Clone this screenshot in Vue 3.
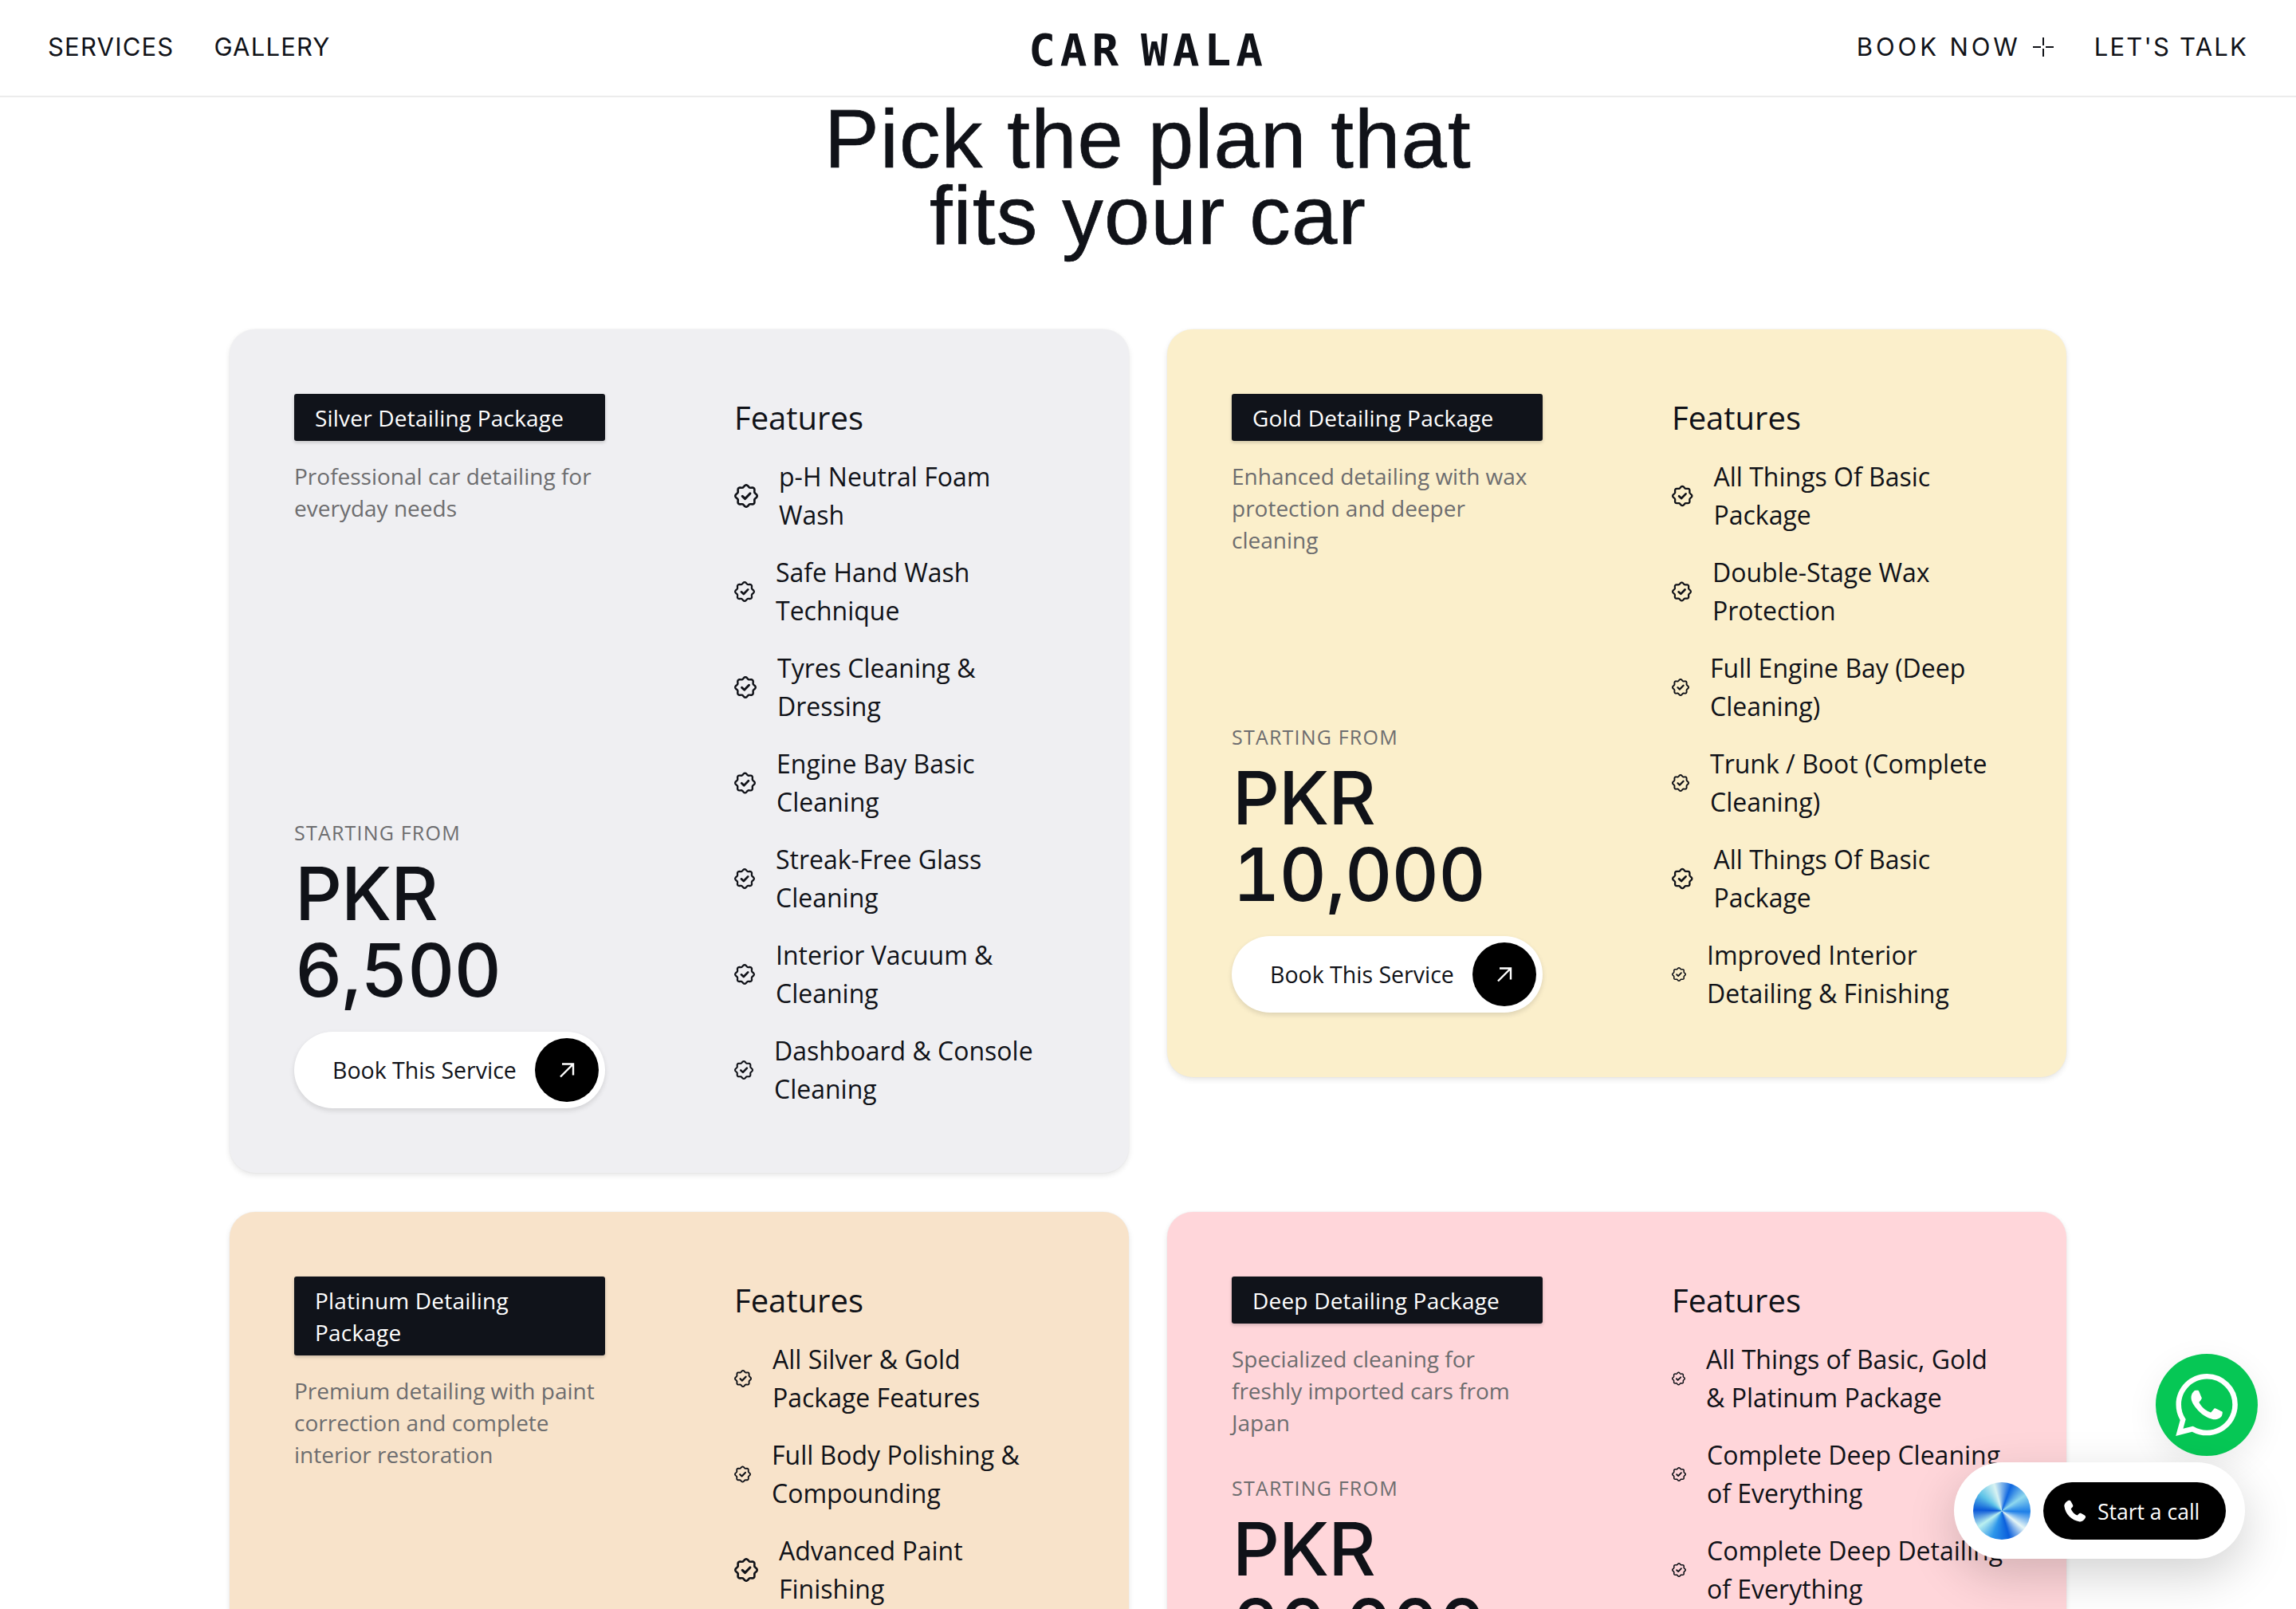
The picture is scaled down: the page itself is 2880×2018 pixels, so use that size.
<script setup>
const plans = [
  {
    name: 'Silver Detailing Package', tone: 'silver',
    desc: 'Professional car detailing for\neveryday needs', amount: '6,500',
    features: [
      ['p-H Neutral Foam\nWash', 30], ['Safe Hand Wash\nTechnique', 26], ['Tyres Cleaning &\nDressing', 28],
      ['Engine Bay Basic\nCleaning', 27], ['Streak-Free Glass\nCleaning', 26], ['Interior Vacuum &\nCleaning', 26],
      ['Dashboard & Console\nCleaning', 24],
    ],
  },
  {
    name: 'Gold Detailing Package', tone: 'gold',
    desc: 'Enhanced detailing with wax\nprotection and deeper\ncleaning', amount: '10,000',
    features: [
      ['All Things Of Basic\nPackage', 26.5], ['Double-Stage Wax\nProtection', 25], ['Full Engine Bay (Deep\nCleaning)', 22],
      ['Trunk / Boot (Complete\nCleaning)', 22], ['All Things Of Basic\nPackage', 26.5], ['Improved Interior\nDetailing & Finishing', 18],
    ],
  },
  {
    name: 'Platinum Detailing\nPackage', tone: 'platinum',
    desc: 'Premium detailing with paint\ncorrection and complete\ninterior restoration', amount: '15,000',
    features: [
      ['All Silver & Gold\nPackage Features', 22], ['Full Body Polishing &\nCompounding', 21], ['Advanced Paint\nFinishing', 30],
    ],
  },
  {
    name: 'Deep Detailing Package', tone: 'deep',
    desc: 'Specialized cleaning for\nfreshly imported cars from\nJapan', amount: '20,000',
    features: [
      ['All Things of Basic, Gold\n& Platinum Package', 17], ['Complete Deep Cleaning\nof Everything', 18], ['Complete Deep Detailing\nof Everything', 18],
    ],
  },
]

// Scalloped badge outline: a circle with eight soft lobes.
const badgePath = Array.from({ length: 96 }, (_, i) => {
  const a = (i / 96) * Math.PI * 2
  const r = 10 + 0.95 * Math.cos(8 * a)
  return `${i ? 'L' : 'M'}${(12 + r * Math.sin(a)).toFixed(2)} ${(12 - r * Math.cos(a)).toFixed(2)}`
}).join('') + 'Z'
</script>

<template>
  <div class="page">
    <header class="nav">
      <nav class="links">
        <a>SERVICES</a>
        <a>GALLERY</a>
      </nav>
      <div class="logo">CAR WALA</div>
      <nav class="links right">
        <a class="book">BOOK NOW
          <svg viewBox="0 0 28 28" width="28" height="28" fill="none" stroke="#101218" stroke-width="2">
            <path d="M14 2v10M14 16v10M1 14h10M17 14h10" />
          </svg>
        </a>
        <a class="talk">LET'S TALK</a>
      </nav>
    </header>

    <h1 class="title">Pick the plan that<br />fits your car</h1>

    <main class="plans">
      <article v-for="plan in plans" :key="plan.name" class="card" :class="plan.tone">
        <div class="info">
          <div class="top">
            <div class="tag">{{ plan.name }}</div>
            <p class="desc">{{ plan.desc }}</p>
          </div>
          <div class="price">
            <div class="from">STARTING FROM</div>
            <div class="amount">PKR<br />{{ plan.amount }}</div>
            <button class="cta">
              <span>Book This Service</span>
              <i class="arrow">
                <svg viewBox="0 0 20 20" width="20" height="20" fill="none" stroke="#fff" stroke-width="2.4">
                  <path d="M2 18.500 18 2.500M4 2.500h14v14" />
                </svg>
              </i>
            </button>
          </div>
        </div>
        <div class="features">
          <h2>Features</h2>
          <ul>
            <li v-for="(f, i) in plan.features" :key="i">
              <svg class="badge" :style="{ width: f[1] + 'px' }" viewBox="0 0 24 24" fill="none" stroke="#101218" stroke-width="2.1" stroke-linejoin="round" stroke-linecap="round">
                <path :d="badgePath" />
                <path d="m8.200 12.300 2.700 2.500 5-5.200" stroke-width="2.500" />
              </svg>
              <span>{{ f[0] }}</span>
            </li>
          </ul>
        </div>
      </article>
    </main>

    <a class="whatsapp">
      <svg viewBox="0 0 24 24" width="78" height="78" fill="#fff">
        <path d="M17.47 14.38c-.3-.15-1.76-.87-2.03-.97-.27-.1-.47-.15-.67.15-.2.3-.77.97-.94 1.16-.17.2-.35.22-.64.08-.3-.15-1.26-.46-2.39-1.48-.88-.79-1.48-1.76-1.65-2.06-.17-.3-.02-.46.13-.6.13-.14.3-.35.45-.53.15-.17.2-.3.3-.5.1-.2.05-.37-.03-.52-.07-.15-.67-1.61-.92-2.2-.24-.58-.49-.5-.67-.51h-.57c-.2 0-.52.07-.8.37-.27.3-1.04 1.02-1.04 2.48s1.07 2.88 1.21 3.07c.15.2 2.1 3.2 5.08 4.49.71.3 1.26.49 1.7.62.71.23 1.36.2 1.87.12.57-.09 1.76-.72 2-1.41.25-.7.25-1.29.18-1.41-.08-.13-.27-.2-.57-.35Z" />
        <path d="M12.05 21.79h-.01a9.87 9.87 0 0 1-5.03-1.38l-.36-.21-3.74.98 1-3.65-.24-.37a9.86 9.86 0 0 1-1.51-5.26c0-5.45 4.44-9.88 9.89-9.88a9.82 9.82 0 0 1 6.99 2.9 9.82 9.82 0 0 1 2.89 6.99c0 5.45-4.43 9.88-9.88 9.88Zm8.41-18.3A11.82 11.82 0 0 0 12.05 0C5.5 0 .16 5.34.16 11.89c0 2.1.55 4.14 1.59 5.95L.06 24l6.3-1.65a11.88 11.88 0 0 0 5.68 1.45h.01c6.55 0 11.89-5.34 11.9-11.9a11.82 11.82 0 0 0-3.49-8.41Z" />
      </svg>
    </a>

    <div class="call">
      <span class="orb"></span>
      <button class="start">
        <svg viewBox="0 0 24 24" width="34" height="34" fill="#fff">
          <path d="M6.600 2.200c.9-.5 1.800-.2 2.300.7l1.700 3.100c.4.700.2 1.500-.3 2L9 9.300c.8 2.500 3 4.900 5.700 5.800l1.300-1.400c.5-.5 1.300-.7 2-.3l3.100 1.800c.9.500 1.100 1.500.6 2.300-1 1.700-2.800 3.600-5 3.300C9.700 19.900 4 14.200 3.100 7.300 2.800 5 4.800 3.200 6.600 2.200Z" />
        </svg>
        <span>Start a call</span>
      </button>
    </div>
  </div>
</template>

<style>
html, body { margin: 0; overflow: hidden; background: #fff; }
</style>

<style scoped>
.page {
  position: relative;
  height: 2018px;
  overflow: hidden;
  background: #fff;
  color: #101218;
  font-family: "Open Sans", "Noto Sans", sans-serif;
}
.nav {
  box-sizing: border-box;
  height: 122px;
  display: grid;
  grid-template-columns: 1fr auto 1fr;
  align-items: center;
  padding: 0 60px 3px 60px;
  border-bottom: 2px solid #ececec;
}
.links {
  display: flex;
  gap: 50px;
  font-family: Inter, sans-serif;
  font-size: 31px;
  letter-spacing: 1.2px;
}
.links.right { justify-content: flex-end; gap: 50px; }
.book { display: flex; align-items: center; gap: 14px; letter-spacing: 3.9px; }
.talk { letter-spacing: 2.2px; }
.logo {
  font-family: "DejaVu Sans Mono", monospace;
  font-weight: 700;
  font-size: 56px;
  letter-spacing: 6px;
  word-spacing: -18px;
  line-height: 1;
  padding-top: 9px;
}
.title {
  margin: 0;
  padding-top: 5px;
  text-align: center;
  font-family: "Liberation Sans", sans-serif;
  font-weight: 400;
  font-size: 103px;
  letter-spacing: 1.2px;
  line-height: 96px;
  -webkit-text-stroke: 0.7px #101218;
}
.plans {
  margin: 94px 288px 0;
  display: grid;
  grid-template-columns: 1128px 1128px;
  gap: 49px 48px;
  align-items: start;
}
.card {
  display: grid;
  grid-template-columns: 390px 1fr;
  column-gap: 162px;
  padding: 81px 80px 81px 81px;
  border-radius: 32px;
  box-shadow: 0 0 0 1px rgba(0, 0, 0, 0.02), 0 3px 7px rgba(0, 0, 0, 0.1);
}
.silver { background: #efeff2; }
.gold { background: #fbefcb; }
.platinum { background: #f8e3ca; min-height: 1000px; }
.deep { background: #ffd6da; }
.info {
  display: flex;
  flex-direction: column;
  justify-content: space-between;
  gap: 44px;
}
.tag {
  padding: 9.5px 26px;
  background: #10131a;
  color: #fff;
  border-radius: 3px;
  font-size: 28px;
  letter-spacing: 0.2px;
  line-height: 40px;
  box-shadow: 0 2px 4px rgba(0, 0, 0, 0.18);
  white-space: pre-line;
}
.desc {
  margin: 24px 0 0;
  color: #6d6d6f;
  font-size: 28px;
  line-height: 40px;
  white-space: pre-line;
}
.from {
  color: #6d6d6f;
  font-size: 25px;
  line-height: 36px;
  letter-spacing: 1.2px;
}
.amount {
  margin-top: 11px;
  font-family: Inter, sans-serif;
  font-weight: 450;
  font-variant-numeric: tabular-nums;
  font-size: 92px;
  letter-spacing: -1px;
  line-height: 96px;
  padding-bottom: 1px;
  padding-left: 1px;
}
.cta {
  margin-top: 28px;
  width: 390px;
  height: 96px;
  display: flex;
  align-items: center;
  justify-content: space-between;
  padding: 0 8px 0 48px;
  border: 0;
  border-radius: 48px;
  background: #fff;
  color: #101218;
  font-family: "Open Sans", sans-serif;
  font-size: 28.5px;
  box-shadow: 0 3px 6px rgba(0, 0, 0, 0.12);
}
.arrow {
  width: 80px;
  height: 80px;
  border-radius: 50%;
  background: #000;
  display: flex;
  align-items: center;
  justify-content: center;
}
.features h2 {
  margin: 0;
  font-size: 40px;
  line-height: 60px;
  font-weight: 400;
}
.features ul {
  list-style: none;
  margin: 20px 0 0;
  padding: 0;
  display: flex;
  flex-direction: column;
  gap: 24px;
}
.features li {
  display: flex;
  align-items: center;
  gap: 26px;
  font-size: 32px;
  line-height: 48px;
}
.features li span { white-space: pre-line; }
.badge { flex: none; height: 32px; }
.whatsapp {
  position: absolute;
  left: 2704px;
  top: 1698px;
  width: 128px;
  height: 128px;
  border-radius: 50%;
  background: #06c755;
  display: flex;
  align-items: center;
  justify-content: center;
  box-shadow: 0 12px 40px rgba(0, 0, 0, 0.08);
}
.call {
  position: absolute;
  left: 2451px;
  top: 1834px;
  width: 365px;
  height: 121px;
  box-sizing: border-box;
  padding: 24px;
  border-radius: 61px;
  background: #fff;
  display: flex;
  align-items: center;
  gap: 16px;
  box-shadow: 0 20px 60px rgba(0, 0, 0, 0.18);
}
.orb {
  width: 72px;
  height: 72px;
  flex: none;
  border-radius: 50%;
  background: conic-gradient(from 20deg, #0f66e0, #8fd8ee, #1e7fe8, #e6f6f6, #0b5fdc, #2d96ea, #baf0f0, #0a58d8, #5fc4e8, #d9f3f2, #0f66e0);
}
.start {
  flex: 1;
  height: 72px;
  display: flex;
  align-items: center;
  gap: 12px;
  padding: 3px 0 0 22px;
  border: 0;
  border-radius: 36px;
  background: #000;
  color: #fff;
  font-family: "Open Sans", sans-serif;
  font-size: 26.5px;
}
</style>
